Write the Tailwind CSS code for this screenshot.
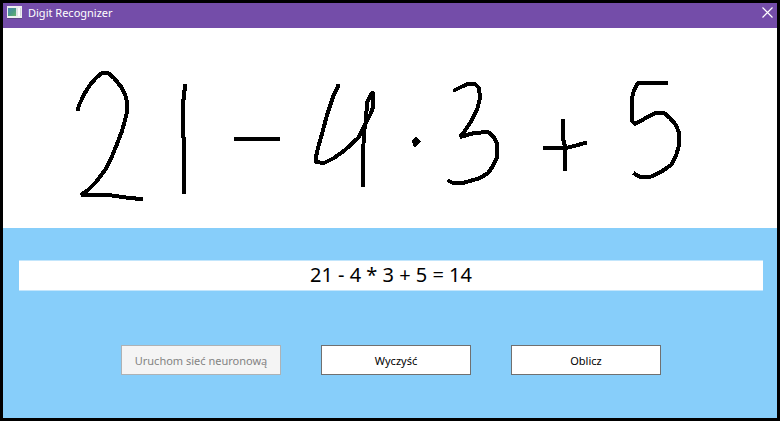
<!DOCTYPE html>
<html lang="pl">
<head>
<meta charset="utf-8">
<meta name="viewport" content="width=device-width, initial-scale=1">
<title>Digit Recognizer</title>
<script src="https://cdn.jsdelivr.net/npm/@tailwindcss/browser@4"></script>
</head>
<body class="bg-black">
<div class="flex min-h-screen flex-col border-3 border-black bg-[#87cefa] font-['Noto_Sans','Open_Sans',sans-serif] text-[11px] text-black">
  <header class="flex h-[25px] items-start justify-between bg-[#744da9] pl-1 pr-1 text-white">
    <div class="flex items-start gap-[5px]">
      <svg class="mt-0.5 h-4 w-4" viewBox="0 0 16 16" aria-hidden="true">
        <defs><linearGradient id="pane" x1="0" y1="0" x2="1" y2="1"><stop offset="0" stop-color="#4f86b4"/><stop offset=".55" stop-color="#4b9a86"/><stop offset="1" stop-color="#67b56c"/></linearGradient></defs>
        <path d="M0 1h15v13H0z" fill="#5c4585"/>
        <path d="M0 1h15v12H0z" fill="#eef0f1"/>
        <path d="M1 3h8v8H1z" fill="url(#pane)"/>
        <path d="M9 3h2v8H9z" fill="#dfe3e5"/>
        <path d="M11 3h2v8h-2z" fill="#fbfbfb"/>
        <path d="M13 3h1v8h-1z" fill="#d5d9dc"/>
      </svg>
      <h1 class="leading-5">Digit Recognizer</h1>
    </div>
    <button type="button" aria-label="Zamknij" class="mt-1">
      <svg class="h-[11px] w-[11px]" viewBox="0 0 11 11" fill="none" stroke="#fff" stroke-width="1.2"><path d="M.5 .5l10 10M10.5 .5l-10 10"/></svg>
    </button>
  </header>
  <main class="flex flex-1 flex-col">
    <div class="h-[200px] overflow-hidden bg-white">
      <svg class="h-full w-full" viewBox="3 28 774 200" preserveAspectRatio="xMinYMin meet" fill="none" stroke="#000" stroke-width="4" stroke-linejoin="bevel" stroke-linecap="square" shape-rendering="crispEdges" role="img" aria-label="21 - 4 · 3 + 5">
        <path d="M78 109L79 105L82 99L83 96L90 85L96 78L102 73L108 73L114 78L122 88L126 97L127 103L127 112L125 120L122 131L117 144L110 161L105 170L96 182L88 190L81 195L108 195L130 198L141 199"/>
        <path d="M185 86L183 104L183 135L184 140L184 192"/>
        <path d="M236 139H278"/>
        <path d="M338 86L333 97L327 115L322 134L318 148L316 157L316 162L324 163L334 158L345 150L358 138L365 125L371 113L373 107L373 92L371 94L367 103L366 120L364 132L363 156L363 170L363 185"/>
        <path d="M412 140L414 138L416 137L421 142L415 147L413 146Z" stroke="none" fill="#000"/>
        <path d="M414 143L416 140L418 142L415 144Z" stroke-width="3" fill="#000"/>
        <path d="M455 90L463 86L468 84L475 84L479 88L480 98L477 110L470 123L464 132L460 137L474 133L488 132L494 137L497 144L497 157L493 166L488 173L480 178L463 183L453 183L449 181"/>
        <path d="M563 121L563 139L565 146L565 169M545 148H566L574 146L585 143"/>
        <path d="M666 83H638L634 90L632 98V121L635 124L644 119L655 113L664 113L670 118L676 125L679 133L679 145L676 156L671 165L661 172L650 177H640L635 174"/>
      </svg>
    </div>
    <section class="flex flex-col gap-[54px] pt-8 pr-3.5 pb-8 pl-4">
      <output aria-label="Wynik" class="block h-[31px] border-y border-[#c3e6fc] bg-white text-center text-xl leading-7">21 - 4 * 3 + 5 = 14</output>
      <div class="flex justify-center gap-10">
        <button type="button" disabled class="h-[30px] w-40 border border-[#adb2b5] bg-[#f4f4f4] pt-0.5 whitespace-nowrap text-[#838383]">Uruchom sieć neuronową</button>
        <button type="button" class="h-[30px] w-[150px] border border-[#707070] bg-white pt-0.5">Wyczyść</button>
        <button type="button" class="h-[30px] w-[150px] border border-[#707070] bg-white pt-0.5">Oblicz</button>
      </div>
    </section>
  </main>
</div>
</body>
</html>
